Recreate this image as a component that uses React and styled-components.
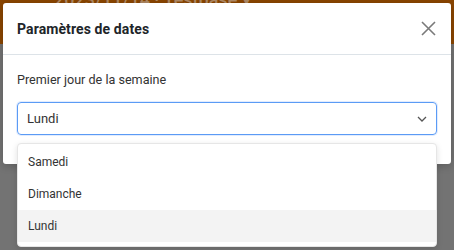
import React from 'react'
import styled, { createGlobalStyle } from 'styled-components'

const Global = createGlobalStyle`
  html, body {
    margin: 0;
    padding: 0;
    font-family: Roboto, "Liberation Sans", Arial, sans-serif;
  }
`

const Page = styled.div`
  width: 454px;
  height: 250px;
  overflow: hidden;
  position: relative;
  background: linear-gradient(to bottom, #8a4500 0, #8a4500 44px, #737373 44px, #737373 100%);
  padding: 3px;
  box-sizing: border-box;
`

const BehindText = styled.div`
  position: absolute;
  top: -11px;
  left: 54px;
  font-size: 18px;
  font-weight: 500;
  color: #b08a66;
  white-space: nowrap;
`

const Dialog = styled.div`
  background: #fff;
  border-radius: 3px;
  width: 448px;
  position: relative;
  box-shadow: 0 2px 8px rgba(0, 0, 0, 0.2);
`

const Header = styled.div`
  height: 51px;
  display: flex;
  align-items: center;
  justify-content: space-between;
  padding: 0 14px 0 14px;
  border-bottom: 1px solid #dde3e8;
`

const Title = styled.h2`
  margin: 0;
  font-size: 14px;
  font-weight: 700;
  color: #212529;
  letter-spacing: 0.1px;
`

const CloseButton = styled.button`
  border: 0;
  background: none;
  padding: 0;
  width: 18px;
  height: 18px;
  display: flex;
  align-items: center;
  justify-content: center;
  cursor: pointer;
`

const Body = styled.div`
  padding: 17px 14px 29px 14px;
`

const Label = styled.div`
  font-size: 12.6px;
  color: #333;
  margin-bottom: 15px;
`

const SelectWrap = styled.div`
  position: relative;
`

const Select = styled.div`
  height: 33px;
  box-sizing: border-box;
  border: 1px solid #5b9bf5;
  border-radius: 4px;
  box-shadow: 0 0 0 1px rgba(59, 130, 246, 0.15);
  display: flex;
  align-items: center;
  justify-content: space-between;
  padding: 0 9px 0 9px;
  font-size: 13px;
  color: #333;
`

const Menu = styled.ul`
  position: absolute;
  top: 41px;
  left: 0;
  right: 0;
  margin: 0;
  padding: 2px 0 4px 0;
  list-style: none;
  background: #fff;
  border-radius: 4px;
  border: 1px solid #e6e6e6;
  box-shadow: 0 2px 6px rgba(0, 0, 0, 0.12);
  z-index: 2;
`

const Option = styled.li`
  height: 32px;
  display: flex;
  align-items: center;
  padding: 0 10px;
  font-size: 12px;
  color: #333;
  background: ${p => (p.$active ? '#f3f3f3' : 'transparent')};
`

const days = ['Samedi', 'Dimanche', 'Lundi']

export default function App () {
  return (
    <>
      <Global />
      <Page>
        <BehindText>2023/11/14 · Testbase ▾</BehindText>
        <Dialog>
          <Header>
            <Title>Paramètres de dates</Title>
            <CloseButton aria-label="Fermer">
              <svg width="15" height="15" viewBox="0 0 15 15">
                <path d="M1 1L14 14M14 1L1 14" stroke="#7a7a7a" strokeWidth="1.6" />
              </svg>
            </CloseButton>
          </Header>
          <Body>
            <Label>Premier jour de la semaine</Label>
            <SelectWrap>
              <Select>
                <span>Lundi</span>
                <svg width="10" height="6" viewBox="0 0 10 6">
                  <path d="M1 1L5 5L9 1" fill="none" stroke="#555" strokeWidth="1.3" />
                </svg>
              </Select>
              <Menu>
                {days.map(d => (
                  <Option key={d} $active={d === 'Lundi'}>{d}</Option>
                ))}
              </Menu>
            </SelectWrap>
          </Body>
        </Dialog>
      </Page>
    </>
  )
}
